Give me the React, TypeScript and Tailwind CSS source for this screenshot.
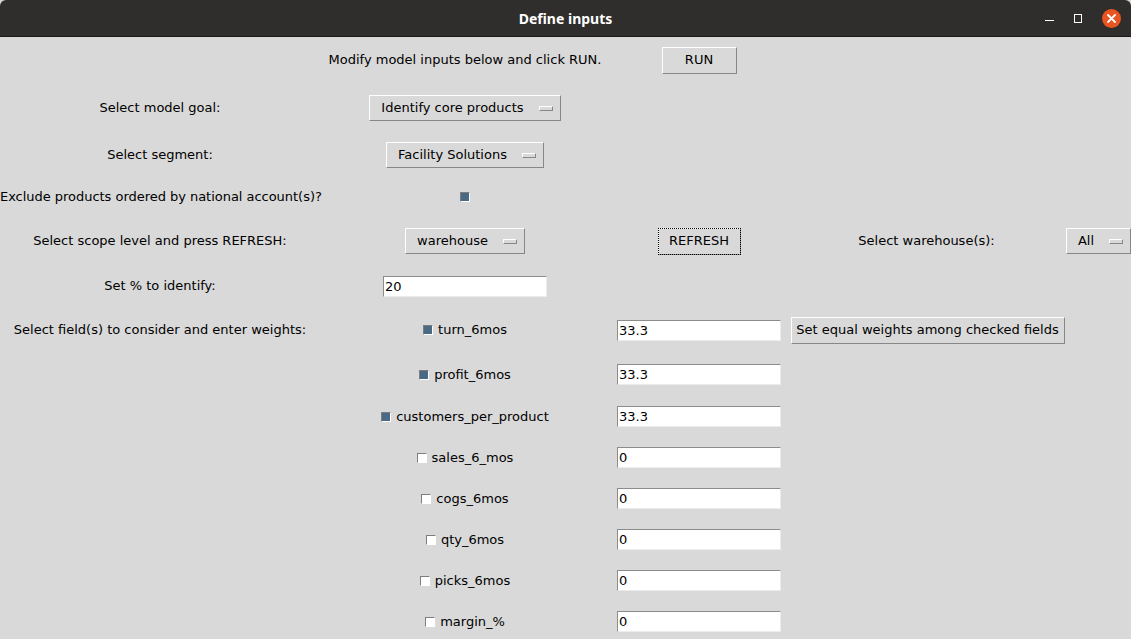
import React from "react";

const font = { fontFamily: '"DejaVu Sans", "Liberation Sans", sans-serif' };

function TitleBar() {
  return (
    <div className="relative flex items-center justify-center h-[37px] bg-[#2f2e2c] rounded-t-[6px] border-b border-[#1b1a19]">
      <span className="text-white font-bold text-[14px]" style={{ fontFamily: '"Noto Sans", "DejaVu Sans", sans-serif' }}>
        Define inputs
      </span>
      {/* window controls */}
      <div className="absolute right-[10px] top-0 h-full flex items-center gap-[20px]">
        <div className="w-[9px] h-[1px] bg-white mt-[5px]" />
        <div className="w-[8px] h-[9px] border border-white" />
        <div className="w-[19px] h-[19px] rounded-full bg-[#e95420] flex items-center justify-center">
          <svg width="9" height="9" viewBox="0 0 9 9">
            <path d="M1 1 L8 8 M8 1 L1 8" stroke="white" strokeWidth="1.8" strokeLinecap="round" />
          </svg>
        </div>
      </div>
    </div>
  );
}

function Menu({ label }: { label: string }) {
  return (
    <div className="flex items-center h-[26px] bg-[#d9d9d9] border border-t-white border-l-white border-b-[#878787] border-r-[#878787] pl-[11px] pr-[7px] whitespace-nowrap">
      <span>{label}</span>
      <span className="ml-[15px] w-[14px] h-[5px] border border-t-white border-l-white border-b-[#878787] border-r-[#878787]" />
    </div>
  );
}

function Button({ label, focus }: { label: string; focus?: boolean }) {
  return (
    <div
      className={`flex items-center justify-center h-[27px] bg-[#d9d9d9] border border-t-white border-l-white border-b-[#878787] border-r-[#878787] px-[4px] whitespace-nowrap ${
        focus ? "outline-1 outline-dotted outline-black -outline-offset-1" : ""
      }`}
    >
      {label}
    </div>
  );
}

function Check({ checked }: { checked: boolean }) {
  return (
    <span
      className={`inline-block w-[10px] h-[10px] border border-t-[#7d7d7d] border-l-[#7d7d7d] border-b-white border-r-white ${
        checked ? "bg-[#4a6984]" : "bg-white"
      }`}
    />
  );
}

function Entry({ value }: { value: string }) {
  return (
    <div className="w-[164px] h-[21px] bg-white border border-t-[#8c8c8c] border-l-[#8c8c8c] border-b-[#ececec] border-r-[#ececec] pl-[1px] flex items-center leading-none">
      {value}
    </div>
  );
}

const fields = [
  { name: "turn_6mos", checked: true, weight: "33.3" },
  { name: "profit_6mos", checked: true, weight: "33.3" },
  { name: "customers_per_product", checked: true, weight: "33.3" },
  { name: "sales_6_mos", checked: false, weight: "0" },
  { name: "cogs_6mos", checked: false, weight: "0" },
  { name: "qty_6mos", checked: false, weight: "0" },
  { name: "picks_6mos", checked: false, weight: "0" },
  { name: "margin_%", checked: false, weight: "0" },
];

export default function App() {
  const cell = "flex items-center justify-center whitespace-nowrap";
  return (
    <div className="w-[1131px] h-[639px] overflow-hidden bg-[#d9d9d9] text-[13px] text-black" style={font}>
      <TitleBar />
      <div className="grid grid-cols-[320px_290px_178px_277px_66px] grid-rows-[46px_50px_44px_40px_48px_42px_46px_43px_41px_41px_41px_41px_41px_41px]">
        {/* row: run */}
        <div />
        <div className={cell}>Modify model inputs below and click RUN.</div>
        <div className={cell}>
          <div className="w-[75px]">
            <Button label="RUN" />
          </div>
        </div>
        <div />
        <div />

        {/* row: model goal */}
        <div className={cell}>Select model goal:</div>
        <div className={cell}>
          <Menu label="Identify core products" />
        </div>
        <div />
        <div />
        <div />

        {/* row: segment */}
        <div className={cell}>Select segment:</div>
        <div className={cell}>
          <Menu label="Facility Solutions" />
        </div>
        <div />
        <div />
        <div />

        {/* row: exclude */}
        <div className="flex items-center justify-start whitespace-nowrap tracking-[-0.03px]">
          Exclude products ordered by national account(s)?
        </div>
        <div className={cell}>
          <Check checked />
        </div>
        <div />
        <div />
        <div />

        {/* row: scope */}
        <div className={cell}>Select scope level and press REFRESH:</div>
        <div className={cell}>
          <Menu label="warehouse" />
        </div>
        <div className={cell}>
          <div className="w-[83px]">
            <Button label="REFRESH" focus />
          </div>
        </div>
        <div className={cell}>Select warehouse(s):</div>
        <div className="flex items-center justify-end">
          <Menu label="All" />
        </div>

        {/* row: percent */}
        <div className={cell}>Set % to identify:</div>
        <div className={cell}>
          <Entry value="20" />
        </div>
        <div />
        <div />
        <div />

        {/* rows: fields */}
        {fields.map((f, i) => (
          <React.Fragment key={f.name}>
            <div className={cell}>{i === 0 ? "Select field(s) to consider and enter weights:" : ""}</div>
            <div className={`${cell} gap-[5px]`}>
              <Check checked={f.checked} />
              <span>{f.name}</span>
            </div>
            <div className={cell}>
              <Entry value={f.weight} />
            </div>
            <div className={cell}>
              {i === 0 ? (
                <div className="w-[274px] -mr-[2px]">
                  <Button label="Set equal weights among checked fields" />
                </div>
              ) : null}
            </div>
            <div />
          </React.Fragment>
        ))}
      </div>
    </div>
  );
}
